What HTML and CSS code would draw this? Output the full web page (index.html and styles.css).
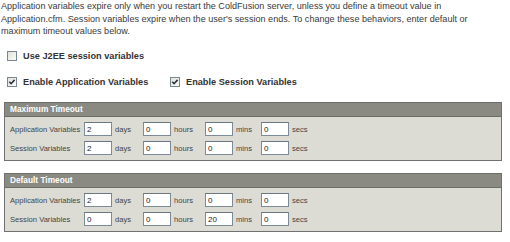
FILE: index.html
```html
<!DOCTYPE html>
<html lang="en">
<head>
    <meta charset="UTF-8">
    <title>Memory Variables</title>
    <link rel="stylesheet" href="styles.css">
</head>
<body>
    <p class="intro">Application variables expire only when you restart the ColdFusion server, unless you define a timeout value in Application.cfm. Session variables expire when the user's session ends. To change these behaviors, enter default or maximum timeout values below.</p>

    <div class="options">
        <label class="check"><span class="box"></span>Use J2EE session variables</label>
    </div>
    <div class="options">
        <label class="check wide"><span class="box on"><svg width="10" height="10" viewBox="0 0 10 10"><path d="M2.3 4.8 L4.1 6.7 L7.6 2.9" fill="none" stroke="#23313f" stroke-width="1.6"/></svg></span>Enable Application Variables</label>
        <label class="check"><span class="box on"><svg width="10" height="10" viewBox="0 0 10 10"><path d="M2.3 4.8 L4.1 6.7 L7.6 2.9" fill="none" stroke="#23313f" stroke-width="1.6"/></svg></span>Enable Session Variables</label>
    </div>

    <div class="panel">
        <div class="panel-head">Maximum Timeout</div>
        <div class="panel-body">
            <div class="row">
                <span class="label">Application Variables</span>
                <input type="text" value="2"><span class="unit days">days</span>
                <input type="text" value="0"><span class="unit hours">hours</span>
                <input type="text" value="0"><span class="unit mins">mins</span>
                <input type="text" value="0"><span class="unit">secs</span>
            </div>
            <div class="row">
                <span class="label">Session Variables</span>
                <input type="text" value="2"><span class="unit days">days</span>
                <input type="text" value="0"><span class="unit hours">hours</span>
                <input type="text" value="0"><span class="unit mins">mins</span>
                <input type="text" value="0"><span class="unit">secs</span>
            </div>
        </div>
    </div>

    <div class="panel">
        <div class="panel-head">Default Timeout</div>
        <div class="panel-body">
            <div class="row">
                <span class="label">Application Variables</span>
                <input type="text" value="2"><span class="unit days">days</span>
                <input type="text" value="0"><span class="unit hours">hours</span>
                <input type="text" value="0"><span class="unit mins">mins</span>
                <input type="text" value="0"><span class="unit">secs</span>
            </div>
            <div class="row">
                <span class="label">Session Variables</span>
                <input type="text" value="0"><span class="unit days">days</span>
                <input type="text" value="0"><span class="unit hours">hours</span>
                <input type="text" value="20"><span class="unit mins">mins</span>
                <input type="text" value="0"><span class="unit">secs</span>
            </div>
        </div>
    </div>
</body>
</html>
```

FILE: styles.css
```css
body {
    margin: 0;
    background: #fff;
    font-family: "Liberation Sans", Arial, sans-serif;
    color: #3a3a3a;
}
.intro {
    margin: 0;
    padding: 0 0 0 1px;
    width: 478px;
    font-size: 9.1px;
    line-height: 12.7px;
}
.options {
    display: flex;
    align-items: center;
    padding-left: 7px;
    margin-top: 13px;
}
.options + .options {
    margin-top: 16px;
}
.check {
    display: flex;
    align-items: center;
    font-size: 9.2px;
    font-weight: bold;
    color: #333;
}
.check.wide {
    width: 163px;
}
.box {
    width: 8px;
    height: 8px;
    margin-right: 6px;
    border: 1px solid #7b8590;
    background: linear-gradient(135deg, #e2e2dc, #fafaf8);
    position: relative;
}
.box svg {
    position: absolute;
    left: -1px;
    top: -1px;
}
.panel {
    margin: 15px 0 0 4px;
    width: 496px;
    border: 1px solid #707070;
    border-top-color: #6e6e68;
}
.panel + .panel {
    margin-top: 12px;
}
.panel-head {
    height: 13px;
    line-height: 13px;
    padding-left: 5px;
    background: #8a8a83;
    border-bottom: 1px solid #6d6d68;
    color: #fff;
    font-size: 8.3px;
    font-weight: bold;
}
.panel-body {
    background: #dcdcd5;
    padding: 5px 0 5px 5px;
    display: flex;
    flex-direction: column;
    gap: 5px;
}
.row {
    display: flex;
    align-items: center;
    height: 14px;
    font-size: 7.6px;
    color: #444;
}
.label {
    width: 74px;
}
.row input {
    width: 23px;
    height: 10px;
    padding: 1px 1px 1px 2px;
    border: 1px solid #7d8a98;
    border-top-color: #6c7784;
    background: #fff;
    font-family: "Liberation Sans", Arial, sans-serif;
    font-size: 8px;
    color: #222;
}
.unit {
    padding-left: 3px;
    width: 28px;
}
.unit.hours {
    width: 31px;
}
.unit.mins {
    width: 25px;
}
```
